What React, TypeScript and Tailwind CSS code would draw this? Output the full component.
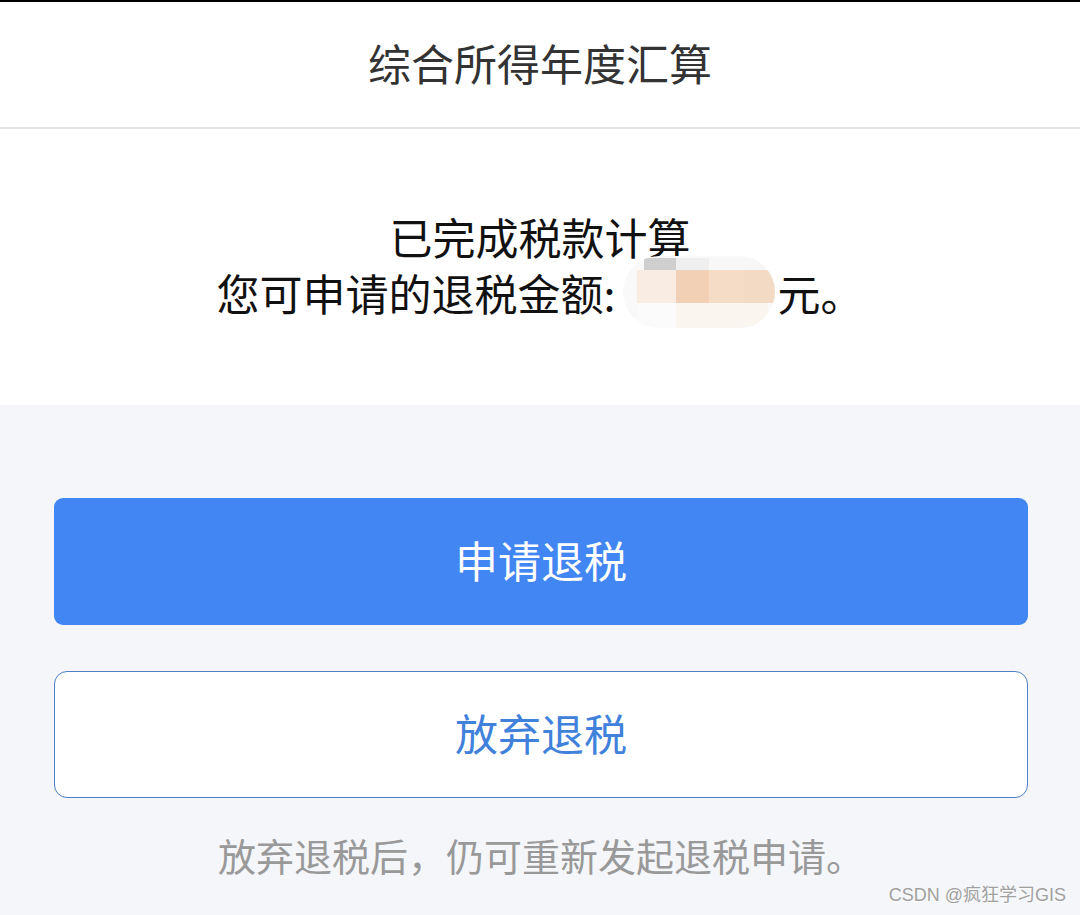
import React from 'react';

const cjk = { fontFamily: '"Noto Sans CJK SC", "Noto Sans", sans-serif' };

// 被打码的金额，用马赛克块画出来
const BlurredAmount: React.FC = () => (
  <svg width="156" height="72" viewBox="0 0 152 72" className="inline-block align-middle -my-[8px] ml-[6px]">
    <defs>
      <clipPath id="pill">
        <rect x="0" y="0" width="152" height="72" rx="36" />
      </clipPath>
    </defs>
    <g clipPath="url(#pill)">
      <rect x="0" y="0" width="152" height="72" fill="#f9f9f9" />
      <rect x="21" y="2" width="32" height="12" fill="#cfcfcf" />
      <rect x="53" y="2" width="33" height="12" fill="#efefef" />
      <rect x="86" y="2" width="66" height="12" fill="#f7f7f7" />
      <rect x="14" y="14" width="39" height="33" fill="#f9ece2" />
      <rect x="53" y="14" width="33" height="33" fill="#f2d0b5" />
      <rect x="86" y="14" width="35" height="33" fill="#f5dcc7" />
      <rect x="121" y="14" width="31" height="33" fill="#f3dac4" />
      <rect x="14" y="47" width="39" height="25" fill="#fbfbfb" />
      <rect x="53" y="47" width="92" height="25" fill="#fbf5ef" />
    </g>
  </svg>
);

const App: React.FC = () => {
  return (
    <div className="relative w-[1080px] h-[915px] overflow-hidden bg-[#f5f6fa]" style={cjk}>
      <div className="h-[2px] bg-black" />
      <div className="h-[127px] bg-white flex items-center justify-center border-b-2 border-[#e2e2e2]">
        <h1 className="text-[43px] leading-none text-[#333] pb-[4px]">综合所得年度汇算</h1>
      </div>

      <div className="h-[276px] bg-white flex flex-col items-center pt-[79px] text-[43px] leading-[56px] text-[#111]">
        <p>已完成税款计算</p>
        <p className="flex items-center h-[56px]">
          <span>您可申请的退税金额:</span>
          <BlurredAmount />
          <span>元。</span>
        </p>
      </div>

      <div className="pl-[54px] pr-[52px] pt-[93px]">
        <button className="w-full h-[127px] pb-[5px] rounded-[9px] bg-[#4286f3] text-white text-[43px] leading-none">
          申请退税
        </button>
        <button className="mt-[46px] w-full h-[127px] pb-[5px] rounded-[13px] bg-white border border-[#4d80c6] text-[#4081dc] text-[43px] leading-none">
          放弃退税
        </button>
        <p className="mt-[35px] text-center text-[38px] leading-[44px] text-[#999]">
          放弃退税后，仍可重新发起退税申请。
        </p>
      </div>

      <div
        className="absolute right-[14px] bottom-[11px] text-[18px] leading-none text-[#a0a0a0] [text-shadow:0_1px_1px_#fff]"
        style={{ fontFamily: '"Liberation Sans", "Noto Sans CJK SC", sans-serif' }}
      >
        CSDN @疯狂学习GIS
      </div>
    </div>
  );
};

export default App;
